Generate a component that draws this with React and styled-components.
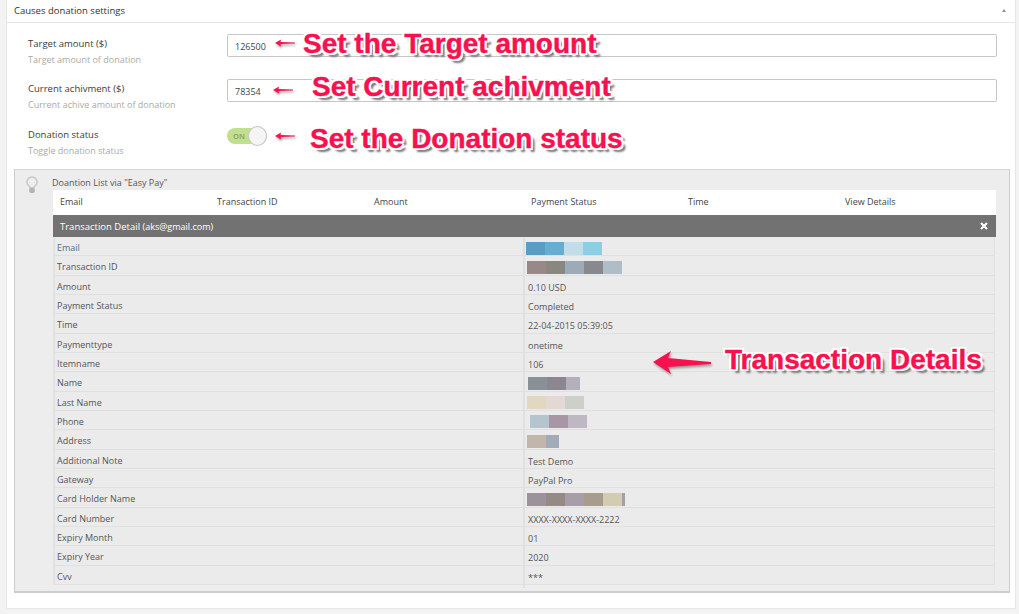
import React from "react";
import styled, { createGlobalStyle } from "styled-components";

const GlobalStyle = createGlobalStyle`
    html, body {
        margin:0;
        padding:0;
        background:#f3f3f3;
        font-family:"Open Sans", "Liberation Sans", sans-serif;
    }
`

const Page = styled.div`
    position:relative;
    width:1019px;
    height:614px;
    overflow:hidden;
    padding:0 3px 5px 6px;
    box-sizing:border-box;
`

const Panel = styled.div`
    background:#fff;
    height:100%;
    box-sizing:border-box;
    border-right:1px solid #e6e6e6;
    border-bottom:1px solid #e6e6e6;
    border-left:1px solid #e6e6e6;
`

const PanelHeader = styled.div`
    display:flex;
    align-items:center;
    justify-content:space-between;
    height:23px;
    padding:0 9px 2px 7px;
    box-sizing:border-box;
    border-bottom:1px solid #e6e6e6;
    font-size:9.5px;
    font-weight:500;
    color:#333;
`

const Caret = styled.span`
    width:0;
    height:0;
    border-left:2.5px solid transparent;
    border-right:2.5px solid transparent;
    border-bottom:3px solid #8a8f96;
`

const Form = styled.div`
    padding:11px 12px 0 21px;
`

const FieldRow = styled.div`
    display:grid;
    grid-template-columns:199px 770px;
    height:${p => p.$height}px;
`

const FieldText = styled.div`
    padding-top:${p => p.$top || 0}px;
`

const FieldLabel = styled.div`
    font-size:9.5px;
    font-weight:500;
    line-height:12px;
    color:#3c3c3c;
`

const FieldHint = styled.div`
    font-size:9px;
    line-height:12px;
    margin-top:4px;
    color:#aaa;
`

const Input = styled.div`
    width:100%;
    height:23px;
    box-sizing:border-box;
    padding-left:7px;
    border:1px solid #c6c6c6;
    border-radius:2px;
    font-size:9px;
    line-height:23px;
    color:#444;
    background:#fff;
`

const Toggle = styled.div`
    position:relative;
    width:40px;
    height:16px;
    margin-top:2px;
    border-radius:8px;
    background:#c0e08c;
    font-size:7.5px;
    font-weight:600;
    line-height:16px;
    padding-left:6px;
    box-sizing:border-box;
    color:#8a9a78;

    &::after {
        content:"";
        position:absolute;
        right:0;
        top:-2px;
        width:19px;
        height:20px;
        border-radius:50%;
        background:#f5f5f5;
        border:1px solid #c8c8c8;
        box-sizing:border-box;
    }
`

const Notice = styled.div`
    display:grid;
    grid-template-columns:38px 943px;
    margin:8px 0 0 7px;
    width:996px;
    height:424px;
    box-sizing:border-box;
    background:#ededed;
    border:1px solid #cdcdcd;
    border-top-color:#d6d6d6;
    border-bottom-width:2px;
`

const BulbIcon = styled.svg`
    margin:6px 0 0 11px;
    display:block;
`

const NoticeTitle = styled.div`
    font-size:9px;
    line-height:12px;
    padding:7px 0 0 0;
    margin-left:-1px;
    height:20px;
    box-sizing:border-box;
    color:#555;
`

const HeadRow = styled.div`
    display:grid;
    grid-template-columns:repeat(6, 157px);
    height:25px;
    background:#fff;
    font-size:9px;
    line-height:24px;
    color:#444;
`

const HeadCell = styled.div`
    padding-left:7px;
`

const DetailBar = styled.div`
    display:flex;
    align-items:center;
    justify-content:space-between;
    height:22px;
    padding:0 8px 0 7px;
    background:#727272;
    color:#fff;
    font-size:9.5px;
    font-weight:500;
    box-sizing:border-box;

    small {
        font-size:9px;
        font-weight:400;
    }
`

const CloseIcon = styled.svg`
    display:block;
`

const DetailTable = styled.div`
    border-left:2px solid #e2e2e2;
    border-right:1px solid #e2e2e2;
    width:942px;
    box-sizing:border-box;
`

const DetailRow = styled.div`
    display:grid;
    grid-template-columns:468px 1fr;
    height:19.33px;
    box-sizing:border-box;
    background:#ebebeb;
    border-bottom:1px solid #e0e0e0;
    font-size:9px;
    line-height:21px;
    color:#555;
`

const LabelCell = styled.div`
    padding-left:2px;
    color:${p => p.$link ? "#4f6f88" : "#555"};
`

const ValueCell = styled.div`
    border-left:2px solid #e0e0e0;
    padding:1px 0 0 3px;
    display:flex;
    align-items:center;
`

const Blur = styled.div`
    display:flex;
    height:13px;
    margin-left:${p => p.$indent || 0}px;
    filter:blur(0.4px);
`

const BlurBlock = styled.span`
    display:block;
    width:${p => p.$w || 19}px;
    height:100%;
    background:${p => p.$c};
`

const Note = styled.div`
    position:absolute;
    left:${p => p.$x}px;
    top:${p => p.$y}px;
    font-family:"Liberation Sans", Arial, sans-serif;
    font-weight:700;
    font-size:28px;
    line-height:1;
    white-space:nowrap;
    color:#f8104f;
    -webkit-text-stroke:0.4px #f8104f;
    text-shadow:
        -2px 0 0 #fff, 2px 0 0 #fff, 0 -2px 0 #fff, 0 2px 0 #fff,
        -2px -2px 0 #fff, 2px -2px 0 #fff, -2px 2px 0 #fff, 2px 2px 0 #fff,
        4px 4px 2px #777;
`

const Arrow = styled.svg`
    position:absolute;
    left:${p => p.$x}px;
    top:${p => p.$y}px;
    overflow:visible;
    filter:drop-shadow(1px 2px 1px rgba(0,0,0,0.35));
`

const columns = ["Email", "Transaction ID", "Amount", "Payment Status", "Time", "View Details"]

const details = [
    { label: "Email", link: true, blocks: [["#5b9cc4"], ["#65aed2"], ["#c0dde9"], ["#8cceE6"]], indent: -2 },
    { label: "Transaction ID", blocks: [["#988888"], ["#888880"], ["#9dabb8"], ["#88888f"], ["#afbdc8"]], indent: -1 },
    { label: "Amount", value: "0.10 USD" },
    { label: "Payment Status", value: "Completed" },
    { label: "Time", value: "22-04-2015 05:39:05" },
    { label: "Paymenttype", value: "onetime" },
    { label: "Itemname", value: "106" },
    { label: "Name", blocks: [["#8a9098"], ["#8c8690"], ["#b5aebd", 14]], indent: 0 },
    { label: "Last Name", blocks: [["#e2d8c2"], ["#e4d8d4"], ["#cdd0c8"]], indent: -1 },
    { label: "Phone", blocks: [["#b5c5d0"], ["#a896a6"], ["#bdb8c2"]], indent: 2 },
    { label: "Address", blocks: [["#c0b6aa"], ["#a2abb8", 13]], indent: -1 },
    { label: "Additional Note", value: "Test Demo" },
    { label: "Gateway", value: "PayPal Pro" },
    { label: "Card Holder Name", blocks: [["#9c929c"], ["#968a84"], ["#a89ea9"], ["#a89c8e"], ["#d2ccb2"], ["#a89eaa", 3]], indent: -1 },
    { label: "Card Number", value: "XXXX-XXXX-XXXX-2222" },
    { label: "Expiry Month", value: "01" },
    { label: "Expiry Year", value: "2020" },
    { label: "Cvv", value: "***" },
]

function SmallArrow({ x, y }){
    return (
        <Arrow $x={x} $y={y} width="20" height="8" viewBox="0 0 20 8">
            <path d="M0 4 L6 0.5 L5.5 3 L20 3.6 L20 4.6 L5.5 5 L6 7.5 Z" fill="#f8104f" />
        </Arrow>
    )
}

export default function App(){
    return (
        <Page>
            <GlobalStyle />
            <Panel>
                <PanelHeader>
                    Causes donation settings
                    <Caret />
                </PanelHeader>
                <Form>
                    <FieldRow $height={45}>
                        <FieldText $top={4}>
                            <FieldLabel>Target amount ($)</FieldLabel>
                            <FieldHint>Target amount of donation</FieldHint>
                        </FieldText>
                        <Input>126500</Input>
                    </FieldRow>
                    <FieldRow $height={47}>
                        <FieldText $top={4}>
                            <FieldLabel>Current achivment ($)</FieldLabel>
                            <FieldHint>Current achive amount of donation</FieldHint>
                        </FieldText>
                        <Input>78354</Input>
                    </FieldRow>
                    <FieldRow $height={35}>
                        <FieldText $top={3}>
                            <FieldLabel>Donation status</FieldLabel>
                            <FieldHint>Toggle donation status</FieldHint>
                        </FieldText>
                        <Toggle>ON</Toggle>
                    </FieldRow>
                </Form>
                <Notice>
                    <BulbIcon width="12" height="18" viewBox="0 0 12 18">
                        <path d="M6 1a5 5 0 0 0-3 9c.6.5.9 1.1.9 1.8h4.2c0-.7.3-1.3.9-1.8A5 5 0 0 0 6 1Z" fill="none" stroke="#c8c8c8" strokeWidth="1.5" />
                        <rect x="3.2" y="12" width="5.6" height="5" rx="1.8" fill="#b4b4b4" />
                    </BulbIcon>
                    <div>
                        <NoticeTitle>Doantion List via "Easy Pay"</NoticeTitle>
                        <HeadRow>
                            {columns.map(column => <HeadCell key={column}>{column}</HeadCell>)}
                        </HeadRow>
                        <DetailBar>
                            <span>Transaction Detail <small>(aks@gmail.com)</small></span>
                            <CloseIcon width="8" height="8" viewBox="0 0 8 8">
                                <path d="M1 1 L7 7 M7 1 L1 7" stroke="#fff" strokeWidth="2" />
                            </CloseIcon>
                        </DetailBar>
                        <DetailTable>
                            {details.map(row => (
                                <DetailRow key={row.label}>
                                    <LabelCell $link={row.link}>{row.label}</LabelCell>
                                    <ValueCell>
                                        {row.blocks ? (
                                            <Blur $indent={row.indent}>
                                                {row.blocks.map(([color, width], i) => (
                                                    <BlurBlock key={i} $c={color} $w={width} />
                                                ))}
                                            </Blur>
                                        ) : row.value}
                                    </ValueCell>
                                </DetailRow>
                            ))}
                        </DetailTable>
                    </div>
                </Notice>
            </Panel>

            <SmallArrow x={275} y={39} />
            <Note $x={303} $y={30}>Set the Target amount</Note>
            <SmallArrow x={273} y={86} />
            <Note $x={312} $y={73}>Set Current achivment</Note>
            <SmallArrow x={275} y={132} />
            <Note $x={310} $y={125}>Set the Donation status</Note>
            <Arrow $x={653} $y={351} width="58" height="23" viewBox="0 0 58 23">
                <path d="M0 11 L18 0 L15 7 L58 11 L58 13 L15 16 L18 23 Z" fill="#f8104f" />
            </Arrow>
            <Note $x={725} $y={346}>Transaction Details</Note>
        </Page>
    )
}
